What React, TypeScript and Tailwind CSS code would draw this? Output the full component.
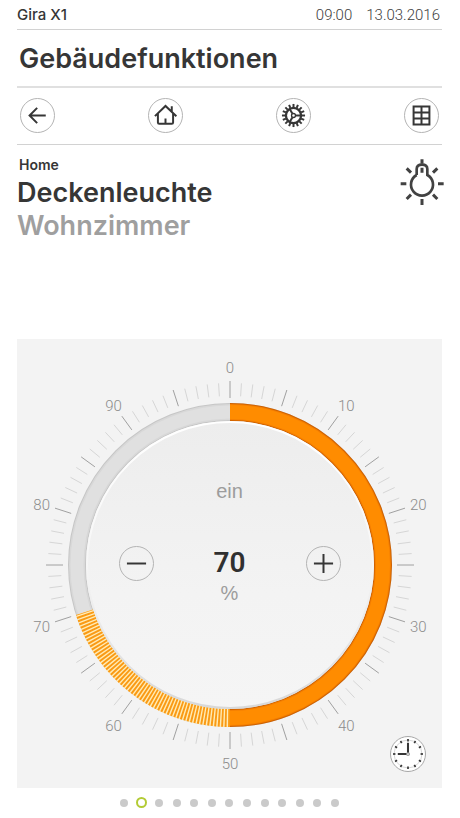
import { useState } from 'react';
import type { ReactNode } from 'react';

const CX = 213;
const CY = 226;
const RING = 153;

// position on the dial, value 0 - 100 clockwise from the top
const point = (value: number, radius: number) => {
  const angle = (value / 100) * 2 * Math.PI;
  return { x: CX + radius * Math.sin(angle), y: CY - radius * Math.cos(angle) };
};

const arc = (from: number, to: number, radius: number) => {
  const a = point(from, radius);
  const b = point(to, radius);
  const large = to - from > 50 ? 1 : 0;
  return `M${a.x} ${a.y}A${radius} ${radius} 0 ${large} 1 ${b.x} ${b.y}`;
};

const ticks = Array.from({ length: 100 }, (_, i) => i);
const labels = [0, 10, 20, 30, 40, 50, 60, 70, 80, 90];
const teeth = Array.from({ length: 16 }, (_, i) => i * 22.5);
const hours = Array.from({ length: 12 }, (_, i) => i * 30);
const pages = Array.from({ length: 13 }, (_, i) => i);

interface RoundButtonProps {
  label: string;
  onClick?: () => void;
  children: ReactNode;
}

const RoundButton = ({ label, onClick, children }: RoundButtonProps) => (
  <button
    type="button"
    aria-label={label}
    onClick={onClick}
    className="size-[35px] shrink-0 rounded-full border border-[#b4b4b4] text-[#363636]"
  >
    <svg viewBox="-50 -50 100 100" className="size-full" fill="none" stroke="currentColor" strokeWidth="6">
      {children}
    </svg>
  </button>
);

const Dial = ({ value }: { value: number }) => (
  <svg viewBox="0 0 425 449" className="col-start-1 row-start-1 w-full" fill="none">
    <defs>
      <linearGradient id="disc" x1="0" y1="0" x2="0" y2="1">
        <stop offset="0" stopColor="#ededed" />
        <stop offset="0.6" stopColor="#f3f3f3" />
        <stop offset="1" stopColor="#f5f5f5" />
      </linearGradient>
      <linearGradient id="rim" x1="0" y1="0" x2="0" y2="1">
        <stop offset="0" stopColor="#ffffff" />
        <stop offset="0.5" stopColor="#f6f6f6" />
        <stop offset="1" stopColor="#d8d8d8" />
      </linearGradient>
    </defs>

    {ticks.map((t) => {
      const major = t % 5 === 0;
      const a = point(t, major ? 167 : 169);
      const b = point(t, major ? 184 : 182);
      return (
        <line key={t} x1={a.x} y1={a.y} x2={b.x} y2={b.y} stroke={major ? '#a0a0a0' : '#d6d6d6'} strokeWidth="1" />
      );
    })}

    {labels.map((l) => {
      const p = point(l, 198);
      return (
        <text
          key={l}
          x={p.x}
          y={p.y + 6}
          textAnchor="middle"
          className="fill-[#8c8c8c] font-[Roboto,sans-serif] text-[15px] font-light"
        >
          {l}
        </text>
      );
    })}

    {/* empty ring */}
    <circle cx={CX} cy={CY} r={RING} stroke="#c6c6c6" strokeWidth="18" />
    <circle cx={CX} cy={CY} r={RING} stroke="#d8d8d8" strokeWidth="16" />
    <circle cx={CX} cy={CY} r={RING} stroke="#e0e0e0" strokeWidth="13" />

    {/* value the lamp is dimming to */}
    <path d={arc(50, value, RING)} stroke="#ffebb5" strokeWidth="18" />
    <path d={arc(50, value, RING)} stroke="#fa9a14" strokeWidth="18" strokeDasharray="1.9 1.4" />

    {/* current value */}
    <path d={arc(0, 50, RING)} stroke="#cf6200" strokeWidth="18" />
    <path d={arc(0, 50, RING)} stroke="#f57f00" strokeWidth="16" />
    <path d={arc(0, 50, RING)} stroke="#ff8c00" strokeWidth="14" />

    <circle cx={CX} cy={CY} r="143" fill="url(#disc)" stroke="url(#rim)" strokeWidth="2" />
  </svg>
);

const App = () => {
  const [value, setValue] = useState(70);
  const [page, setPage] = useState(1);

  return (
    <div className="bg-white pr-[18px] pl-[17px] font-[Inter,sans-serif] text-[#363636]">
      <div className="flex h-[30px] items-center justify-between border-b border-[#d2d2d2] pt-[2px]">
        <span className="text-[15px] font-medium">Gira X1</span>
        <div className="flex gap-[14px] pr-[2px] font-[Roboto,sans-serif] text-[15px] font-light text-[#404040]">
          <time>09:00</time>
          <time>13.03.2016</time>
        </div>
      </div>

      <h1 className="flex h-[58px] items-center border-b-2 border-[#e0e0e0] pt-[2px] pl-[2px] text-[27px] font-semibold">
        Gebäudefunktionen
      </h1>

      <nav className="flex h-[57px] items-center justify-between border-b border-[#d2d2d2] px-[3px] pb-[2px]">
        <RoundButton label="Zurück">
          <path d="M25 0H-22M-1 -23L-24 0L-1 23" />
        </RoundButton>
        <RoundButton label="Home">
          <path d="M-32 2L0 -29L33 2M-23 -5V21Q-23 25 -19 25H19Q23 25 23 21V-5M0 9V25M19 -28V-12" />
        </RoundButton>
        <RoundButton label="Einstellungen">
          <circle r="23" strokeWidth="7" />
          <circle r="6" strokeWidth="4" />
          {teeth.map((a) => (
            <path key={a} d="M25 0H35" strokeWidth="6" transform={`rotate(${a})`} />
          ))}
          {[0, 120, 240].map((a) => (
            <path key={a} d="M7 0H23" strokeWidth="6" transform={`rotate(${a})`} />
          ))}
        </RoundButton>
        <RoundButton label="Übersicht">
          <path d="M-24 -27H24V27H-24ZM0 -27V27M-24 -9H24M-24 9H24" />
        </RoundButton>
      </nav>

      <header className="flex h-[194px] justify-between pt-3">
        <div>
          <p className="mb-[3px] pl-[2px] text-[14px] leading-4 font-semibold">Home</p>
          <h2 className="text-[27px] leading-[33px] font-semibold">Deckenleuchte</h2>
          <p className="text-[27px] leading-[33px] font-semibold text-[#9f9f9f]">Wohnzimmer</p>
        </div>
        <svg
          viewBox="60 42 132 141"
          className="-mr-[2px] mt-[2px] h-[47px] w-[44px] shrink-0"
          fill="none"
          stroke="#424242"
          strokeWidth="8"
        >
          {/* bulb without a line between socket and glass */}
          <path d="M110 90V72Q110 59 126 59Q142 59 142 72V90A33 33 0 1 1 110 90" />
          <path
            d="M126 43V56M126 68V83M62 116H79M174 116H191M126 162V180M80 70L93 83M172 70L159 83M80 162L93 149M159 149L172 162"
            strokeWidth="9"
          />
        </svg>
      </header>

      <main className="grid bg-[#f3f3f3]">
        <Dial value={value} />

        <div className="col-start-1 row-start-1 flex w-[222px] items-center justify-between self-center justify-self-center">
          <RoundButton label="Dunkler" onClick={() => setValue(Math.max(51, value - 1))}>
            <path d="M-29 0H29" />
          </RoundButton>
          <div className="flex flex-col items-center pb-[42px] font-['Liberation_Sans',sans-serif] text-[#9c9c9c]">
            <span className="pb-11 text-[20px] leading-6">ein</span>
            <output className="font-[Roboto,sans-serif] text-[28px] leading-8 font-semibold text-[#303030]">
              {value}
            </output>
            <span className="text-[20px] leading-7">%</span>
          </div>
          <RoundButton label="Heller" onClick={() => setValue(Math.min(99, value + 1))}>
            <path d="M-29 0H29M0 -29V29" />
          </RoundButton>
        </div>

        <button
          type="button"
          aria-label="Zeitschaltuhr"
          className="col-start-1 row-start-1 m-4 size-9 self-end justify-self-end rounded-full border border-[#a8a8a8] bg-white"
        >
          <svg viewBox="-50 -50 100 100" className="size-full" fill="none" stroke="#363636">
            <circle r="41" stroke="#c4c4c4" strokeWidth="2" />
            {hours.map((a) => (
              <path key={a} d="M37 0H44" strokeWidth="5" transform={`rotate(${a})`} />
            ))}
            <path d="M0 -33V-4M-30 0H-4" strokeWidth="6" />
            <circle r="4" stroke="#808080" strokeWidth="3" />
          </svg>
        </button>
      </main>

      <div className="mx-auto flex h-[29px] w-[223px] items-center justify-between">
        {pages.map((p) => (
          <button
            key={p}
            type="button"
            aria-label={`Seite ${p + 1}`}
            onClick={() => setPage(p)}
            className="flex size-3 items-center justify-center"
          >
            <span
              className={
                p === page ? 'size-[11px] rounded-full border-2 border-[#b3cb35] bg-white' : 'size-2 rounded-full bg-[#cacaca]'
              }
            />
          </button>
        ))}
      </div>
    </div>
  );
};

export default App;
